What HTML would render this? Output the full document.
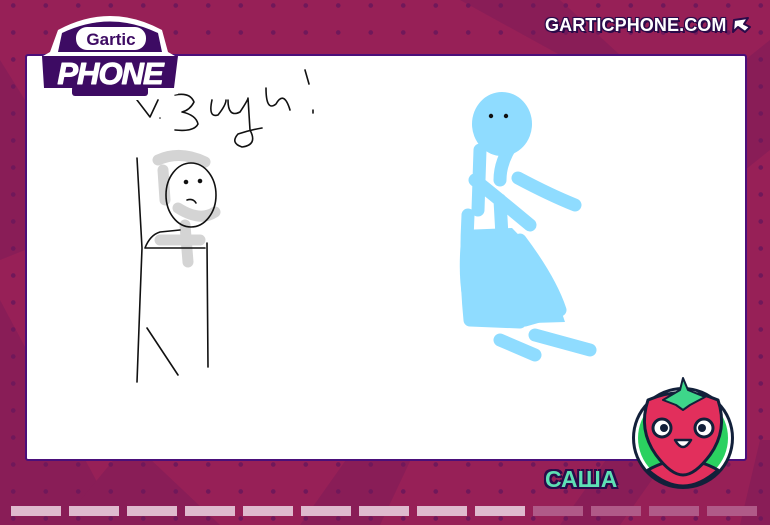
<!DOCTYPE html>
<html><head><meta charset="utf-8"><style>
html,body{margin:0;padding:0}
body{width:770px;height:525px;overflow:hidden;position:relative;background:#972057;font-family:"Liberation Sans",sans-serif}
.dots{position:absolute;inset:0;background-image:radial-gradient(circle,#70185a 2px,transparent 2.6px);background-size:32.5px 27px;background-position:-3px -8px}
.rays{position:absolute;inset:0}
.canvas{position:absolute;left:25px;top:54px;width:718px;height:403px;background:#fff;border:2px solid #4b0f7a;border-radius:3px}
.bar{position:absolute;top:506px;height:10px;width:50px}
.site{position:absolute;left:545px;top:15px;color:#fff;font-weight:bold;font-size:18px;letter-spacing:0.1px;text-shadow:0 0 2px #2a0b4a,2px 2px 0 #2a0b4a,-1px -1px 0 #2a0b4a,1px -1px 0 #2a0b4a,-1px 1px 0 #2a0b4a}
.name{position:absolute;left:545px;top:466px;color:#5ee0b4;font-weight:bold;font-size:23px;text-shadow:2px 2px 0 #2a0b4a,-2px -2px 0 #2a0b4a,2px -2px 0 #2a0b4a,-2px 2px 0 #2a0b4a,0 2px 0 #2a0b4a}
</style></head><body>
<svg class="rays" width="770" height="525"><g fill="#861d57" opacity="0.8">
<polygon points="0,300 120,525 0,525"/><polygon points="60,525 130,440 220,525"/><polygon points="300,525 360,440 420,440 380,525"/><polygon points="560,525 620,440 680,440 620,525"/><polygon points="760,440 770,440 770,525 740,525"/><polygon points="0,60 25,100 25,250 0,260"/><polygon points="460,0 560,0 620,55 560,55"/><polygon points="745,60 770,40 770,150 745,170"/></g></svg>
<div class="dots"></div>
<div class="canvas"></div>
<svg style="position:absolute;left:0;top:0" width="770" height="525" fill="none" stroke-linecap="round" stroke-linejoin="round">
<g stroke="#d4d4d4" stroke-width="11"><path d="M158 160 Q180 150 205 162 M163 170 L165 200 M178 208 Q200 222 215 212 M185 225 L188 262 M160 240 L200 240"/></g>
<g stroke="#111" stroke-width="1.6">
<path d="M137 100 L150 117 L158 100 M160 118 L160 118 M175 95 Q190 92 194 102 Q190 110 182 112 Q196 115 198 124 Q194 132 175 130 M212 100 Q208 118 218 115 Q226 105 226 100 M228 100 Q228 118 240 112 Q248 100 248 98 L250 130 Q258 145 242 147 Q230 143 238 134 Q250 130 262 128 M266 88 Q266 112 276 104 Q284 90 290 110 M305 70 L309 84 M313 110 L313 113"/>
<ellipse cx="191" cy="195" rx="25" ry="32"/>
<circle cx="186" cy="182" r="1.5" fill="#111"/><circle cx="200" cy="181" r="1.5" fill="#111"/><path d="M187 200 Q193 198 196 203"/>
<path d="M137 158 L142 248 L140 300 L137 382 M147 328 L178 375 M207 243 L208 367 M145 248 L205 248 M145 248 Q150 235 160 232 L180 230"/>
</g>
<g stroke="#8fdcff" stroke-width="13">
<path d="M500 100 Q520 110 515 140 Q500 160 500 180 M480 150 L478 210 M468 215 Q465 270 470 320 L520 322 M475 180 Q500 200 530 225 M518 178 Q550 195 575 205 M500 200 L505 290 M520 240 Q550 280 560 310 L525 320 M500 340 L535 355 M535 335 L590 350 M490 260 L520 285"/>
</g>
<ellipse cx="502" cy="124" rx="30" ry="32" fill="#8fdcff"/>
<path d="M462 230 Q455 290 470 325 L565 322 Q545 260 512 228 Z" fill="#8fdcff"/>
<circle cx="491" cy="116" r="2.2" fill="#111"/><circle cx="506" cy="116" r="2.2" fill="#111"/>
<!-- logo -->
<g>
<path d="M58 30 Q110 2 162 30 L168 52 L182 60 L178 94 L150 100 L68 100 L38 94 L36 60 L50 52 Z" fill="#fff"/>
<path d="M62 33 Q110 10 158 33 L162 52 L58 52 Z" fill="#3d0b63"/>
<rect x="76" y="27" width="70" height="23" rx="11" fill="#fff"/>
<text x="111" y="45" text-anchor="middle" fill="#3d0b63" font-weight="bold" font-size="17" font-family="Liberation Sans">Gartic</text>
<path d="M42 56 L178 56 L174 88 L44 88 Z" fill="#3d0b63"/>
<text x="110" y="84" text-anchor="middle" fill="#fff" font-weight="bold" font-style="italic" font-size="31" font-family="Liberation Sans" letter-spacing="-1" stroke="#fff" stroke-width="1">PHONE</text>
<rect x="72" y="86" width="76" height="10" rx="3" fill="#3d0b63"/>
</g>
<!-- avatar -->
<circle cx="683" cy="438" r="51" fill="#12203a"/>
<circle cx="683" cy="438" r="48" fill="#fff"/>
<circle cx="683" cy="438" r="45" fill="#2bd160"/>
<path d="M648 470 Q683 450 718 470 Q700 486 683 486 Q666 486 648 470 Z" fill="#e22f5c" stroke="#12203a" stroke-width="3"/>
<path d="M648 400 Q683 385 718 400 Q728 430 710 455 Q695 475 683 475 Q671 475 656 455 Q638 430 648 400 Z" fill="#e22f5c" stroke="#12203a" stroke-width="3"/>
<path d="M663 400 L680 390 L683 378 L688 390 L705 397 L690 405 L683 410 L676 405 Z" fill="#3ed68a" stroke="#12203a" stroke-width="2"/>
<circle cx="662" cy="428" r="9" fill="#fff" stroke="#12203a" stroke-width="3"/><circle cx="704" cy="428" r="9" fill="#fff" stroke="#12203a" stroke-width="3"/>
<circle cx="664" cy="428" r="4" fill="#12203a"/><circle cx="702" cy="428" r="4" fill="#12203a"/>
<path d="M675 440 Q683 454 691 440 Z" fill="#fff" stroke="#12203a" stroke-width="2.5"/>
<!-- arrow -->
<path d="M734 20 L748 18 L744 24 L750 27 L745 32 L738 27 L733 32 Z" fill="#fff" stroke="#2a0b4a" stroke-width="2"/>
</svg>
<div class="site">GARTICPHONE.COM</div>
<div class="name">САША</div>
<div class="bar" style="left:11px;background:#dfbace"></div>
<div class="bar" style="left:69px;background:#dfbace"></div>
<div class="bar" style="left:127px;background:#dfbace"></div>
<div class="bar" style="left:185px;background:#dfbace"></div>
<div class="bar" style="left:243px;background:#dfbace"></div>
<div class="bar" style="left:301px;background:#dfbace"></div>
<div class="bar" style="left:359px;background:#dfbace"></div>
<div class="bar" style="left:417px;background:#dfbace"></div>
<div class="bar" style="left:475px;background:#dfbace"></div>
<div class="bar" style="left:533px;background:#b05a88"></div>
<div class="bar" style="left:591px;background:#b05a88"></div>
<div class="bar" style="left:649px;background:#b05a88"></div>
<div class="bar" style="left:707px;background:#b05a88"></div>
</body></html>
